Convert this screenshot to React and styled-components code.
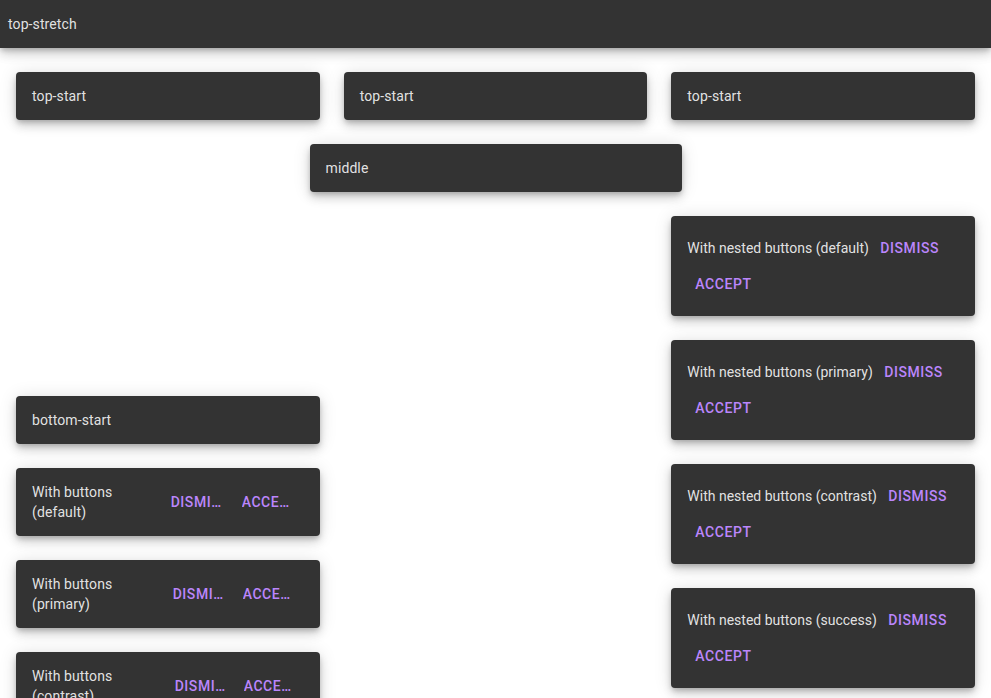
import styled, { createGlobalStyle } from 'styled-components';

const GlobalStyle = createGlobalStyle`
  html, body {
    margin: 0;
    padding: 0;
    overflow: hidden;
    background: #ffffff;
  }

  body {
    font-family: Roboto, 'Noto Sans', 'Liberation Sans', sans-serif;
    -webkit-font-smoothing: antialiased;
  }
`;

const Page = styled.div`
  width: 991px;
  height: 698px;
  overflow: hidden;
`;

const Surface = styled.div`
  display: flex;
  align-items: center;
  box-sizing: border-box;
  min-height: 48px;
  background: #333333;
  border-radius: ${({ $stretch }) => ($stretch ? '0' : '4px')};
  box-shadow: 0 3px 5px -1px rgba(0, 0, 0, 0.2), 0 6px 10px 0 rgba(0, 0, 0, 0.14),
    0 1px 18px 0 rgba(0, 0, 0, 0.12);
  width: ${({ $width }) => ($width ? `${$width}px` : 'auto')};
  margin: ${({ $center }) => ($center ? '0 auto' : '0')};
`;

const Label = styled.div`
  flex: 1 1 auto;
  min-width: 0;
  box-sizing: border-box;
  padding: 14px ${({ $stretch }) => ($stretch ? '8px' : '16px')};
  color: rgba(255, 255, 255, 0.87);
  font-size: 14px;
  line-height: 20px;
  letter-spacing: 0.1px;
`;

const NestedLabel = styled(Label)`
  line-height: 36px;
  padding: 14px 16px;
  letter-spacing: 0;
`;

const Actions = styled.div`
  display: flex;
  align-items: center;
  flex: 0 0 auto;
  margin-right: 15px;
`;

const ActionButton = styled.button`
  display: inline-flex;
  align-items: center;
  justify-content: ${({ $w }) => ($w ? 'flex-start' : 'center')};
  box-sizing: border-box;
  height: 36px;
  width: ${({ $w }) => ($w ? `${$w}px` : 'auto')};
  min-width: ${({ $w }) => ($w ? '0' : '64px')};
  padding: 0 8px;
  border: none;
  background: transparent;
  color: #bb86fc;
  font-family: inherit;
  font-size: 14px;
  font-weight: 500;
  line-height: 36px;
  letter-spacing: 0.55px;
  text-transform: uppercase;
  vertical-align: top;
  cursor: pointer;
`;

const ButtonText = styled.span`
  display: block;
  overflow: hidden;
  white-space: nowrap;
  text-overflow: ellipsis;
`;

const Content = styled.div`
  display: flex;
  flex-direction: column;
  gap: 24px;
  padding: 24px 16px 0;
`;

const Row = styled.div`
  display: grid;
  grid-template-columns: repeat(3, 1fr);
  gap: 24px;
  align-items: start;
`;

const Column = styled.div`
  display: flex;
  flex-direction: column;
  gap: 24px;
  padding-top: ${({ $offset }) => $offset || 0}px;
`;

const Snackbar = ({ children, ...rest }) => (
  <Surface {...rest}>
    <Label $stretch={rest.$stretch}>{children}</Label>
  </Surface>
);

const ButtonSnackbar = ({ kind, width }) => (
  <Surface>
    <Label>With buttons ({kind})</Label>
    <Actions>
      <ActionButton $w={width}>
        <ButtonText>Dismiss</ButtonText>
      </ActionButton>
      <ActionButton $w={width}>
        <ButtonText>Accept</ButtonText>
      </ActionButton>
    </Actions>
  </Surface>
);

const NestedSnackbar = ({ kind }) => (
  <Surface>
    <NestedLabel>
      With nested buttons ({kind}) <ActionButton>Dismiss</ActionButton>{' '}
      <ActionButton>Accept</ActionButton>
    </NestedLabel>
  </Surface>
);

const App = () => (
  <Page>
    <GlobalStyle />
    <Snackbar $stretch>top-stretch</Snackbar>
    <Content>
      <Row>
        <Snackbar>top-start</Snackbar>
        <Snackbar>top-start</Snackbar>
        <Snackbar>top-start</Snackbar>
      </Row>
      <Snackbar $width={372} $center>
        middle
      </Snackbar>
      <Row>
        <Column $offset={180}>
          <Snackbar>bottom-start</Snackbar>
          <ButtonSnackbar kind='default' width={71} />
          <ButtonSnackbar kind='primary' width={70} />
          <ButtonSnackbar kind='contrast' width={69} />
        </Column>
        <Column />
        <Column>
          <NestedSnackbar kind='default' />
          <NestedSnackbar kind='primary' />
          <NestedSnackbar kind='contrast' />
          <NestedSnackbar kind='success' />
        </Column>
      </Row>
    </Content>
  </Page>
);

export default App;
